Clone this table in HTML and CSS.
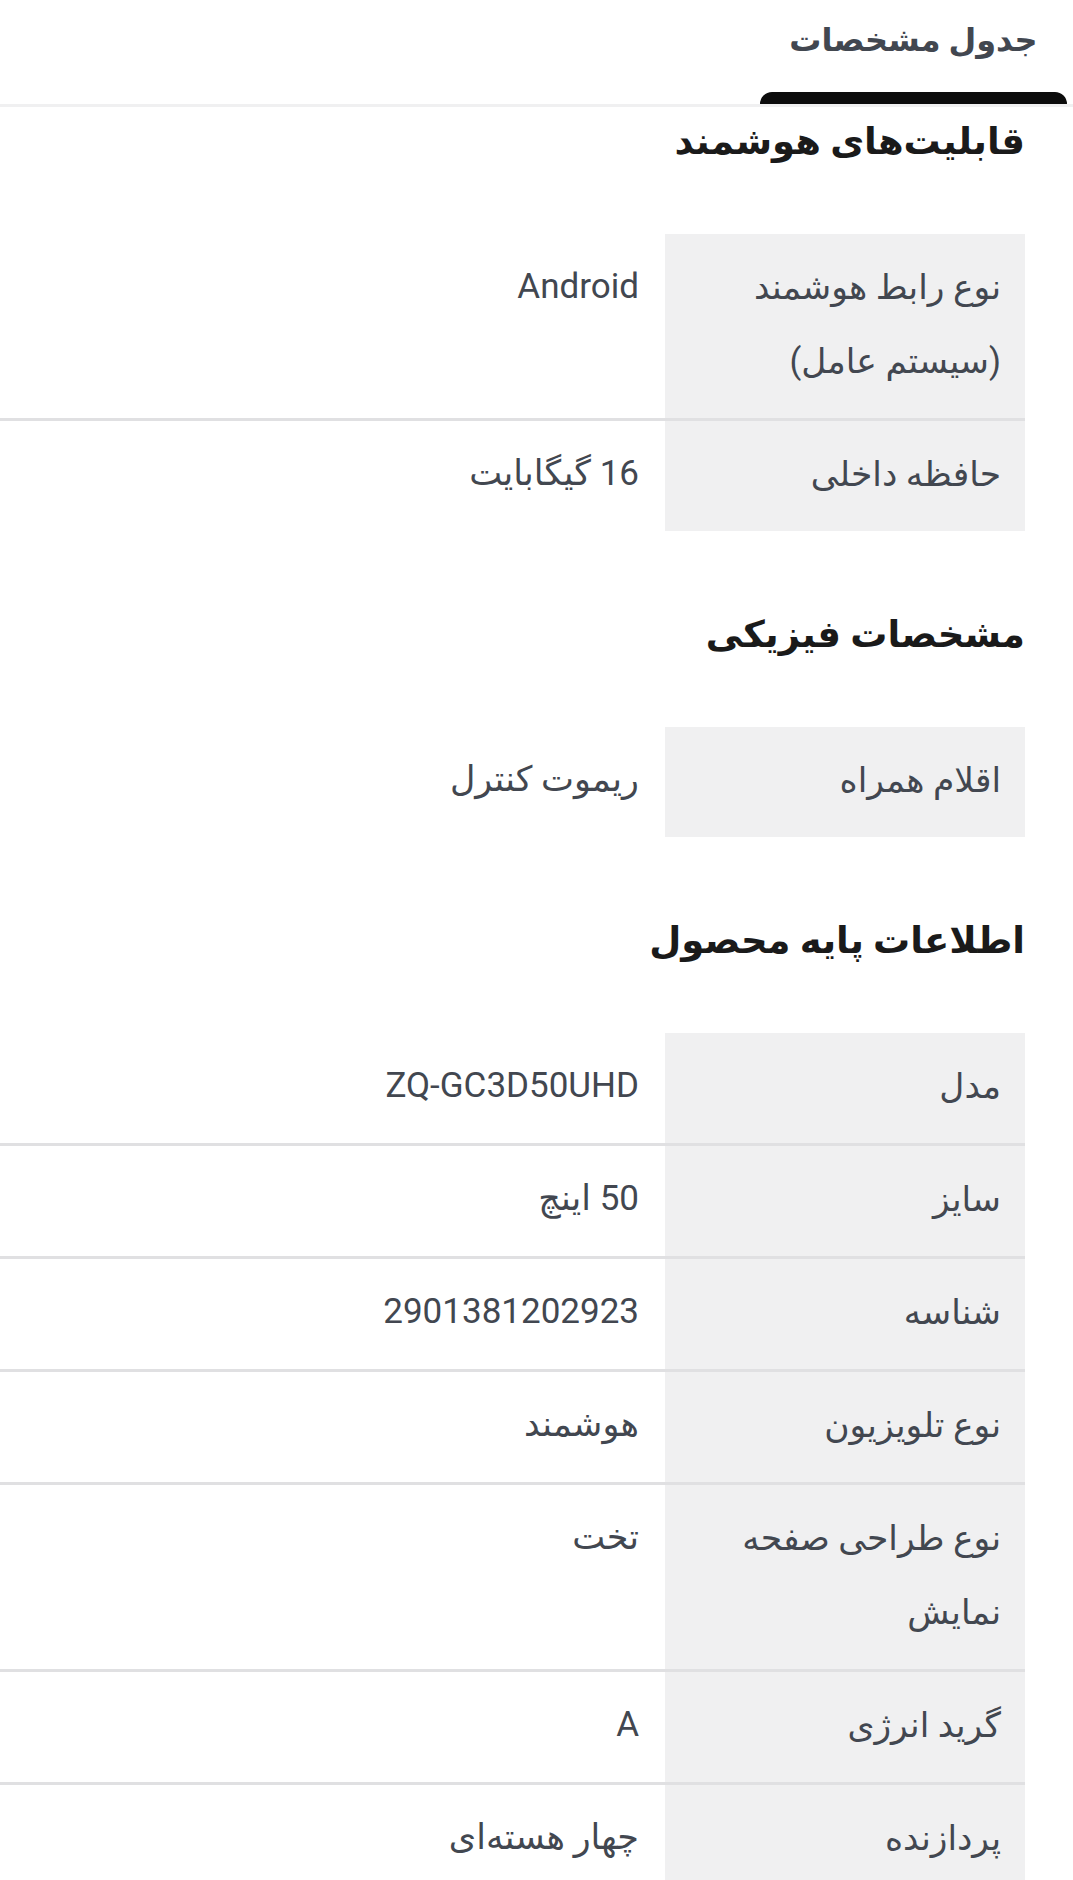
FILE: index.html
```html
<!DOCTYPE html>
<html lang="fa" dir="rtl">
<head>
<meta charset="utf-8">
<title>جدول مشخصات</title>
<link rel="stylesheet" href="styles.css">
</head>
<body>
<nav class="tabs">
  <div class="tab active">
    <span class="tab-label">جدول مشخصات</span>
    <span class="tab-indicator"></span>
  </div>
</nav>
<main class="content">
  <section class="spec-section first">
    <h2 class="spec-title">قابلیت‌های هوشمند</h2>
    <div class="spec-table">
      <div class="spec-row">
        <div class="spec-key">نوع رابط هوشمند (سیستم عامل)</div>
        <div class="spec-val">Android</div>
      </div>
      <div class="spec-row">
        <div class="spec-key">حافظه داخلی</div>
        <div class="spec-val">16 گیگابایت</div>
      </div>
    </div>
  </section>
  <section class="spec-section">
    <h2 class="spec-title">مشخصات فیزیکی</h2>
    <div class="spec-table">
      <div class="spec-row">
        <div class="spec-key">اقلام همراه</div>
        <div class="spec-val">ریموت کنترل</div>
      </div>
    </div>
  </section>
  <section class="spec-section">
    <h2 class="spec-title">اطلاعات پایه محصول</h2>
    <div class="spec-table">
      <div class="spec-row">
        <div class="spec-key">مدل</div>
        <div class="spec-val">ZQ-GC3D50UHD</div>
      </div>
      <div class="spec-row">
        <div class="spec-key">سایز</div>
        <div class="spec-val">50 اینچ</div>
      </div>
      <div class="spec-row">
        <div class="spec-key">شناسه</div>
        <div class="spec-val">2901381202923</div>
      </div>
      <div class="spec-row">
        <div class="spec-key">نوع تلویزیون</div>
        <div class="spec-val">هوشمند</div>
      </div>
      <div class="spec-row">
        <div class="spec-key">نوع طراحی صفحه نمایش</div>
        <div class="spec-val">تخت</div>
      </div>
      <div class="spec-row">
        <div class="spec-key">گرید انرژی</div>
        <div class="spec-val">A</div>
      </div>
      <div class="spec-row">
        <div class="spec-key">پردازنده</div>
        <div class="spec-val">چهار هسته‌ای</div>
      </div>
    </div>
  </section>
</main>
</body>
</html>
```
FILE: styles.css
```css
* { box-sizing: border-box; }
html, body {
  margin: 0;
  padding: 0;
  background: #ffffff;
}
body {
  direction: rtl;
  font-family: Roboto, "DejaVu Sans", sans-serif;
  color: #424750;
  overflow: hidden;
}
.tabs {
  display: flex;
  padding-right: 6px;
  border-bottom: 3px solid #f0f0f1;
}
.tab {
  width: 307px;
  display: flex;
  flex-direction: column;
  align-items: center;
}
.tab-label {
  height: 80px;
  line-height: 80px;
  font-size: 32px;
  font-weight: bold;
  color: #424750;
}
.tab-indicator {
  margin-top: 12px;
  width: 100%;
  height: 12px;
  background: #0c0c0c;
  border-radius: 12px 12px 0 0;
}
.content {
  padding-right: 48px;
}
.spec-section {
  margin-top: 74px;
}
.spec-section.first {
  margin-top: 5px;
}
.spec-title {
  margin: 0 0 62px 0;
  height: 60px;
  line-height: 60px;
  font-size: 37px;
  font-weight: bold;
  color: #1a1a1a;
}
.spec-table {
  display: flex;
  flex-direction: column;
}
.spec-row {
  display: flex;
  border-bottom: 3px solid #e0e0e2;
}
.spec-row:last-child {
  border-bottom: none;
}
.spec-key {
  flex: 0 0 360px;
  background: #f0f0f1;
  padding: 16px 24px 20px 16px;
  font-size: 34.5px;
  line-height: 74px;
}
.spec-val {
  flex: 1;
  padding: 16px 26px 20px 0;
  font-size: 35px;
  line-height: 74px;
}
```
